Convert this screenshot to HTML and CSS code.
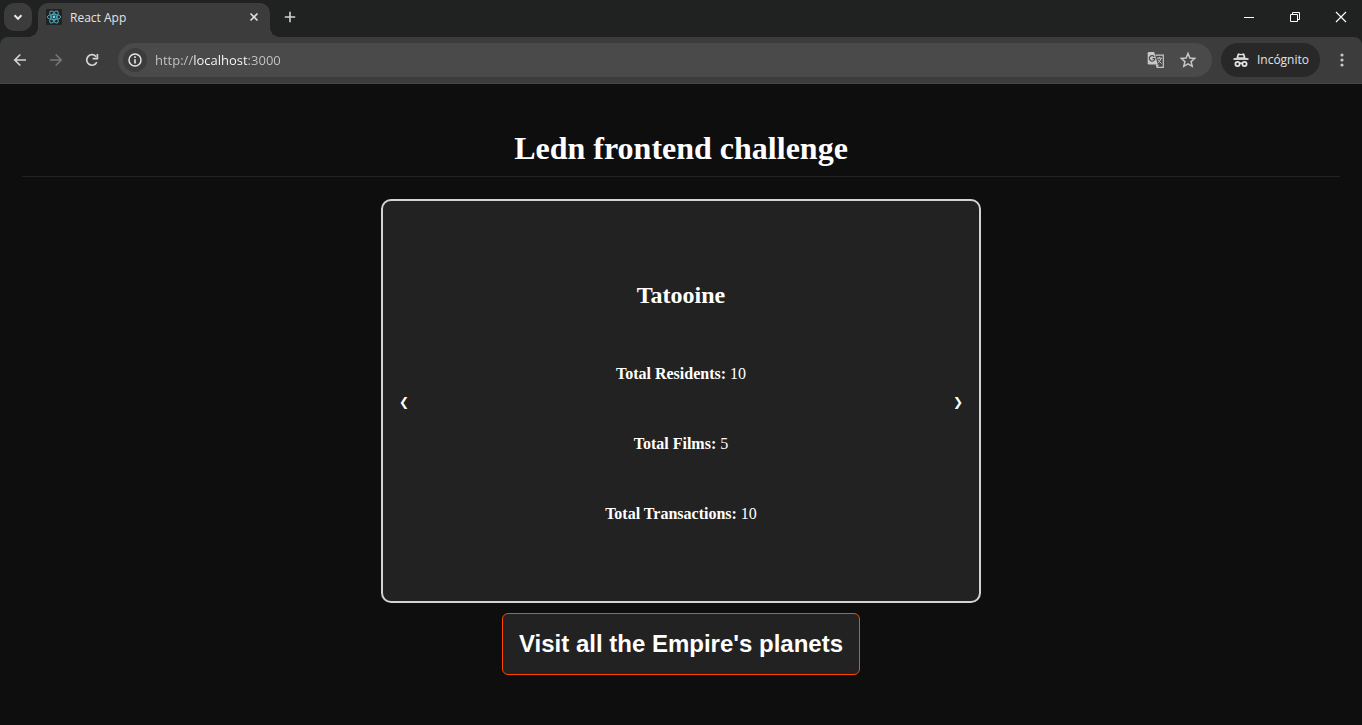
FILE: index.html
```
<!DOCTYPE html>
<html lang="en">
<head>
<meta charset="utf-8">
<title>React App</title>
<link rel="stylesheet" href="styles.css">
</head>
<body>
<header class="browser">
  <div class="tabstrip">
    <button class="tab-search" aria-label="Search tabs">
      <svg width="28" height="28" viewBox="0 0 28 28"><path d="M10.500 12.300L14 15.800L17.500 12.300" fill="none" stroke="#e8e8e8" stroke-width="2"/></svg>
    </button>
    <div class="tab">
      <svg class="favicon" width="16" height="16" viewBox="0 0 16 16">
        <rect width="16" height="16" rx="1" fill="#222"/>
        <g fill="none" stroke="#4aa5b8" stroke-width="1">
          <ellipse cx="8" cy="8" rx="6.700" ry="2.600"/>
          <ellipse cx="8" cy="8" rx="6.700" ry="2.600" transform="rotate(60 8 8)"/>
          <ellipse cx="8" cy="8" rx="6.700" ry="2.600" transform="rotate(120 8 8)"/>
        </g>
        <circle cx="8" cy="8" r="1.400" fill="#61dafb"/>
      </svg>
      <span class="tab-title">React App</span>
      <button class="tab-close" aria-label="Close tab">
        <svg width="16" height="16" viewBox="0 0 16 16"><path d="M4.500 4.500L11.500 11.500M11.500 4.500L4.500 11.500" stroke="#dedede" stroke-width="1.600"/></svg>
      </button>
    </div>
    <button class="new-tab" aria-label="New tab">
      <svg width="28" height="28" viewBox="0 0 28 28"><path d="M14 8.800V19.200M8.800 14H19.200" stroke="#d2d2d2" stroke-width="1.600"/></svg>
    </button>
    <div class="window-controls">
      <button aria-label="Minimize"><svg width="46" height="34" viewBox="0 0 46 34"><path d="M18 17.500H28" stroke="#fff"/></svg></button>
      <button aria-label="Restore"><svg width="46" height="34" viewBox="0 0 46 34"><path d="M18.500 14.500H25.500V21.500H18.500ZM20.500 14.500V12.500H27.500V19.500H25.500" fill="none" stroke="#fff"/></svg></button>
      <button aria-label="Close"><svg width="46" height="34" viewBox="0 0 46 34"><path d="M18 12L28 22M28 12L18 22" stroke="#fff" stroke-width="1.200"/></svg></button>
    </div>
  </div>
  <div class="toolbar">
    <button class="nav" aria-label="Back"><svg width="28" height="28" viewBox="0 0 28 28"><path d="M20 14H9.500M14.300 8.500L8.800 14L14.300 19.500" fill="none" stroke="#d4d4d4" stroke-width="1.700"/></svg></button>
    <button class="nav" aria-label="Forward"><svg width="28" height="28" viewBox="0 0 28 28"><path d="M8 14H18.500M13.700 8.500L19.200 14L13.700 19.500" fill="none" stroke="#777" stroke-width="1.700"/></svg></button>
    <button class="nav" aria-label="Reload"><svg width="28" height="28" viewBox="0 0 28 28"><path d="M18.800 16.200A5.300 5.300 0 1 1 18.200 10.700" fill="none" stroke="#d4d4d4" stroke-width="1.700"/><path d="M19.400 8V12.600H14.600" fill="none" stroke="#d4d4d4" stroke-width="1.700"/></svg></button>
    <div class="omnibox">
      <button class="site-info" aria-label="Site information"><svg width="24" height="24" viewBox="0 0 24 24"><circle cx="12" cy="12" r="6" fill="none" stroke="#e6e6e6" stroke-width="1.500"/><path d="M12 11.200V15.500M12 8.300V9.900" stroke="#e6e6e6" stroke-width="1.600"/></svg></button>
      <input class="address" type="text" value="http://localhost:3000" aria-label="Address" spellcheck="false">
      <button class="action" aria-label="Translate"><svg width="20" height="20" viewBox="0 0 20 20">
        <path d="M9.500 5.200H17.300V17.300H11.200L10.200 14.500" fill="none" stroke="#c7c7c7" stroke-width="1.200"/>
        <path d="M3 2H8.200L11.800 14.500H3Q1.700 14.500 1.700 13.200V3.300Q1.700 2 3 2Z" fill="#c7c7c7"/>
        <path d="M8.300 6.800A2.700 2.700 0 1 0 8.800 8.700H6.500" fill="none" stroke="#4a4a4a" stroke-width="1.200"/>
        <path d="M10.800 8.200H16M13.400 7V8.200M15 8.500Q14 11.500 11.800 13M12 9.500Q13 11.500 15.500 13.500" fill="none" stroke="#c7c7c7" stroke-width="1"/>
        <path d="M11 14.700L10.800 17.300L13.300 14.700Z" fill="#c7c7c7"/>
      </svg></button>
      <button class="action" aria-label="Bookmark this page"><svg width="20" height="20" viewBox="0 0 20 20"><path d="M10 3.500L11.900 8L16.700 8.400L13.100 11.600L14.200 16.300L10 13.800L5.800 16.300L6.900 11.600L3.300 8.400L8.100 8Z" fill="none" stroke="#c7c7c7" stroke-width="1.500"/></svg></button>
    </div>
    <button class="incognito"><svg width="16" height="16" viewBox="0 0 16 16"><path d="M3.300 6.200L4.600 2.100Q4.900 1.100 5.900 1.400L8 2L10.100 1.400Q11.100 1.100 11.400 2.100L12.700 6.200Z" fill="#e3e3e3"/><path d="M6 3.200H10L10.600 5.300H5.400Z" fill="#282828"/><path d="M.5 7H15.500" stroke="#e3e3e3" stroke-width="1.800"/><g fill="none" stroke="#e3e3e3" stroke-width="1.800"><circle cx="4.500" cy="12" r="2.100"/><circle cx="11.500" cy="12" r="2.100"/><path d="M6.700 11.500Q8 10.800 9.300 11.500"/></g></svg><span>Incógnito</span></button>
    <button class="menu" aria-label="Menu"><svg width="28" height="28" viewBox="0 0 28 28" fill="#c7c7c7"><circle cx="14" cy="9" r="1.600"/><circle cx="14" cy="14" r="1.600"/><circle cx="14" cy="19" r="1.600"/></svg></button>
  </div>
</header>
<main class="page">
  <h1 class="page-title">Ledn frontend challenge</h1>
  <section class="carousel" aria-label="Planets">
    <button class="arrow" aria-label="Previous planet">❮</button>
    <div class="planet">
      <h2 class="planet-name">Tatooine</h2>
      <p><strong>Total Residents:</strong> 10</p>
      <p><strong>Total Films:</strong> 5</p>
      <p><strong>Total Transactions:</strong> 10</p>
    </div>
    <button class="arrow" aria-label="Next planet">❯</button>
  </section>
  <button class="visit">Visit all the Empire's planets</button>
</main>
</body>
</html>
```
FILE: styles.css
```
* { box-sizing: border-box; }
body {
  margin: 0;
  min-height: 100vh;
  background: #0e0e0e;
  color: #fff;
  font-family: "Liberation Serif", serif;
  font-size: 16px;
}
button {
  margin: 0;
  padding: 0;
  border: 0;
  background: none;
  color: inherit;
  font: inherit;
}
svg { display: block; flex: none; }

.browser { font: 12px/16px "Open Sans", sans-serif; background: #1f2221; }
.tabstrip { display: flex; align-items: flex-start; height: 37px; padding-left: 4px; }
.tab-search { margin-top: 3px; border-radius: 10px; background: #3c3c3c; }
.tab {
  position: relative;
  display: flex;
  align-items: center;
  width: 232px;
  height: 34px;
  margin: 3px 0 0 6px;
  padding: 0 8px 6px;
  border-radius: 10px 10px 0 0;
  background: #3c3c3c;
}
.tab::before, .tab::after {
  content: "";
  position: absolute;
  bottom: 0;
  width: 10px;
  height: 10px;
}
.tab::before { right: 100%; background: radial-gradient(circle at 0 0, transparent 10px, #3c3c3c 10px); }
.tab::after { left: 100%; background: radial-gradient(circle at 100% 0, transparent 10px, #3c3c3c 10px); }
.tab-title { flex: 1; margin-left: 8px; padding-top: 2px; color: #e3e3e3; }
.new-tab { margin: 3px 0 0 6px; }
.window-controls { display: flex; margin: 0 -2px 0 auto; }

.toolbar {
  display: flex;
  align-items: center;
  height: 47px;
  padding: 0 6px;
  border-bottom: 1px solid #474747;
  border-radius: 8px 8px 0 0;
  background: #3c3c3c;
}
.nav { margin-right: 8px; }
.omnibox {
  display: flex;
  flex: 1;
  align-items: center;
  min-width: 0;
  height: 34px;
  margin-left: 4px;
  padding: 0 14px 0 5px;
  border-radius: 17px;
  background: #4a4a4a;
}
.site-info { border-radius: 50%; background: #3c3c3c; }
.address {
  flex: 1;
  min-width: 0;
  margin: 0 0 0 8px;
  padding: 0;
  border: 0;
  outline: 0;
  font: 13px/20px "Open Sans", sans-serif;
  color: transparent;
  background: linear-gradient(90deg, #c7c7c7 38px, #fff 38px 93px, #c7c7c7 93px);
  background-clip: text;
}
.action + .action { margin-left: 12px; }
.incognito {
  display: flex;
  align-items: center;
  gap: 8px;
  height: 34px;
  margin-left: 9px;
  padding: 0 11px 0 12px;
  border-radius: 17px;
  background: #282828;
  color: #e3e3e3;
}
.menu { margin-left: 8px; }

.page {
  display: flex;
  flex-direction: column;
  align-items: center;
  padding: 44px 22px 22px;
}
.page-title {
  align-self: stretch;
  margin: 0 0 22px;
  padding-bottom: 8px;
  border-bottom: 1px solid #222;
  font-size: 32px;
  line-height: 40px;
  text-align: center;
}
.carousel {
  display: flex;
  align-items: center;
  justify-content: space-between;
  width: 100%;
  max-width: 600px;
  padding: 60px 16px;
  border: 2px solid #d3d3d3;
  border-radius: 10px;
  background: #222;
}
.arrow { padding-top: 2px; font: 12px/20px "DejaVu Sans", sans-serif; }
.planet { text-align: center; }
.planet-name { margin: 20px 0 56px; font-size: 24px; line-height: 28px; }
.planet p { margin: 0 0 52px; line-height: 18px; }
.planet p:last-child { margin-bottom: 18px; }
.visit {
  margin-top: 10px;
  padding: 16px;
  border: 1px solid #ff4500;
  border-radius: 6px;
  background: #222;
  font: bold 24px/28px "Liberation Sans", sans-serif;
}
```
